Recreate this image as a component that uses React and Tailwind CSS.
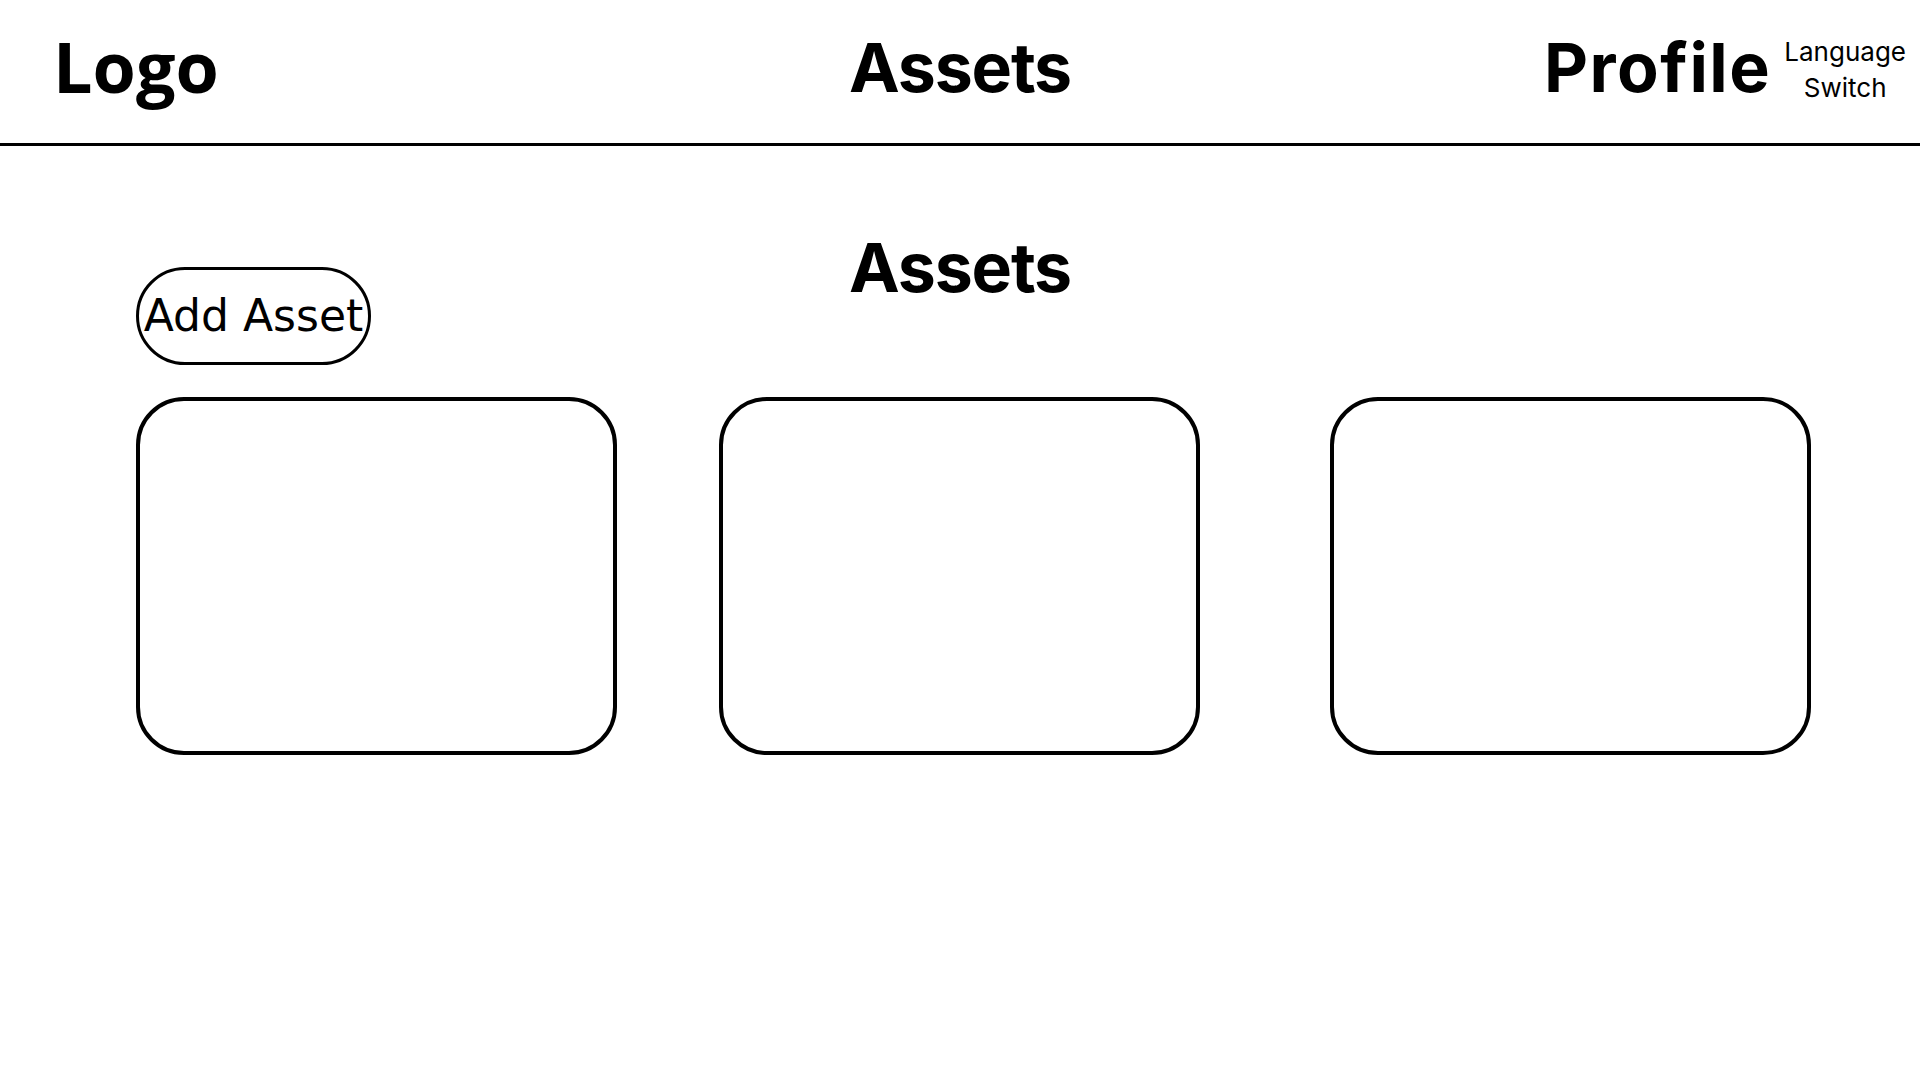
import React from "react";

const cards = [1, 2, 3];

export default function App() {
  return (
    <div className="min-h-screen bg-white text-black">
      {/* top bar */}
      <header className="grid h-[146px] grid-cols-3 border-b-[3px] border-black">
        <div className="pl-[53px] pt-[31px]">
          <span className="font-['Open_Sans',sans-serif] text-[70px] font-bold leading-none">
            Logo
          </span>
        </div>
        <div className="flex justify-center pt-[33px]">
          <span className="font-['Inter',sans-serif] text-[68px] font-bold leading-none tracking-[-1.2px]">
            Assets
          </span>
        </div>
        <div className="flex items-start justify-end gap-[13px] pr-[14px]">
          <span className="pt-[33px] font-['Inter',sans-serif] text-[68px] font-bold leading-none tracking-[1.5px]">
            Profile
          </span>
          <div className="pt-[34px] text-center font-['Inter',sans-serif] text-[26px] leading-[36px]">
            <div>Language</div>
            <div>Switch</div>
          </div>
        </div>
      </header>

      <main className="px-[136px] pt-[87px]">
        <div className="grid grid-cols-[1fr_auto_1fr] items-start">
          <div className="pt-[34px]">
            <button
              type="button"
              className="flex h-[98px] w-[235px] items-center justify-center rounded-full border-[3px] border-black font-['DejaVu_Sans',sans-serif] text-[44px] leading-none whitespace-nowrap"
            >
              Add Asset
            </button>
          </div>
          <h1 className="font-['Inter',sans-serif] text-[68px] font-bold leading-none tracking-[-1.2px]">
            Assets
          </h1>
          <div />
        </div>

        {/* asset cards */}
        <div className="mt-[32px] flex gap-[102px]">
          {cards.map((c) => (
            <div
              key={c}
              className={
                c === 3
                  ? "ml-[28px] h-[358px] w-[481px] shrink-0 rounded-[48px] border-[4px] border-black"
                  : "h-[358px] w-[481px] shrink-0 rounded-[48px] border-[4px] border-black"
              }
            />
          ))}
        </div>
      </main>
    </div>
  );
}
